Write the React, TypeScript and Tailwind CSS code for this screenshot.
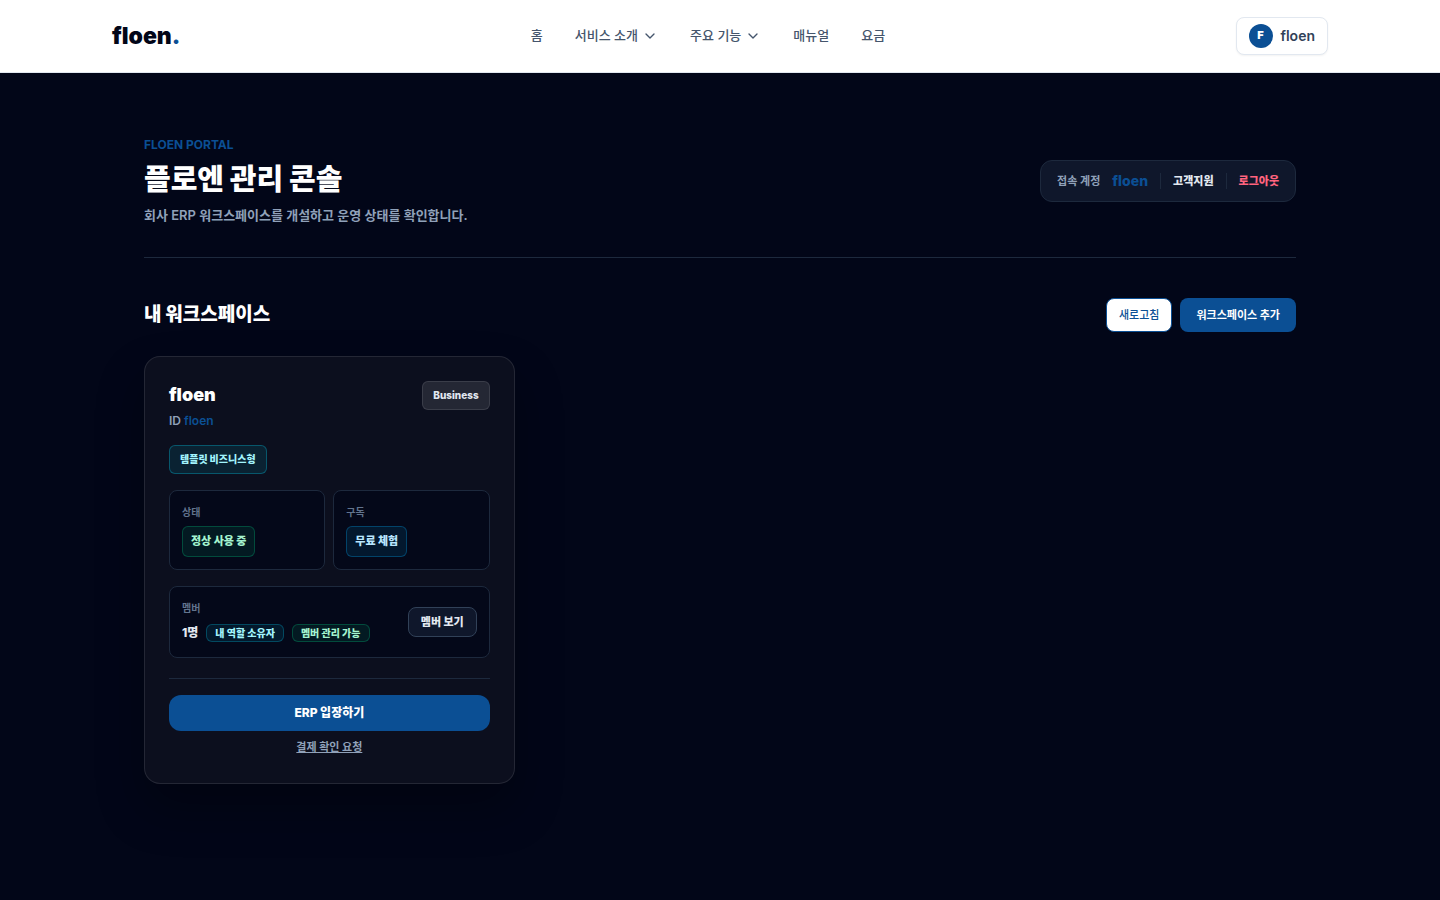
import { ChevronDown } from 'lucide-react'

interface Workspace {
  name: string;
  id: string;
  plan: string;
  template: string;
  status: string;
  subscription: string;
  members: number;
}

const navItems = [
  { label: '홈', menu: false },
  { label: '서비스 소개', menu: true },
  { label: '주요 기능', menu: true },
  { label: '매뉴얼', menu: false },
  { label: '요금', menu: false },
]

const workspaces: Workspace[] = [
  {
    name: 'floen',
    id: 'floen',
    plan: 'Business',
    template: '템플릿 비즈니스형',
    status: '정상 사용 중',
    subscription: '무료 체험',
    members: 1,
  },
]

function SiteHeader() {
  return (
    <header className="border-b border-slate-200 bg-white">
      <div className="mx-auto flex h-18 max-w-7xl items-center justify-between px-8">
        <a href="#" className="text-[23px] leading-8 font-black text-slate-950">
          floen<span className="text-[#0b4f94]">.</span>
        </a>
        <nav className="flex items-center gap-8 text-[13px] font-medium text-slate-600">
          {navItems.map((item) =>
            item.menu ? (
              <button key={item.label} type="button" className="flex items-center gap-1">
                {item.label}
                <ChevronDown className="size-4" />
              </button>
            ) : (
              <a key={item.label} href="#">{item.label}</a>
            )
          )}
        </nav>
        <button type="button" className="flex h-[38px] items-center gap-2 rounded-lg border border-slate-200 bg-white px-3 text-sm font-semibold text-slate-700 shadow-xs">
          <span className="flex size-6 items-center justify-center rounded-full bg-[#0b4f94] text-[11px] font-black text-white">F</span>
          floen
        </button>
      </div>
    </header>
  )
}

function ConsoleHeader() {
  return (
    <div className="flex items-center justify-between border-b border-slate-800 pb-8">
      <div>
        <p className="text-xs font-bold text-[#0b4f94]">FLOEN PORTAL</p>
        <h1 className="mt-2 text-[29px] leading-[38px] font-black text-white">플로엔 관리 콘솔</h1>
        <p className="mt-1.5 text-[13px] leading-5 font-semibold text-slate-400">
          회사 ERP 워크스페이스를 개설하고 운영 상태를 확인합니다.
        </p>
      </div>
      <div className="flex items-center gap-3 rounded-xl border border-slate-800 bg-slate-900 px-4 py-2.5 text-[11px]">
        <span className="font-semibold text-slate-400">접속 계정</span>
        <span className="text-sm font-extrabold text-[#0b4f94]">floen</span>
        <span className="h-4 w-px bg-slate-800" />
        <a href="#" className="font-black text-slate-200">고객지원</a>
        <span className="h-4 w-px bg-slate-800" />
        <button type="button" className="font-black text-rose-400">로그아웃</button>
      </div>
    </div>
  )
}

function WorkspaceCard({ workspace }: { workspace: Workspace }) {
  return (
    <article className="rounded-2xl border border-white/10 bg-[#0c0f1e] p-6 shadow-[0_24px_48px_rgba(0,0,0,0.3)]">
      <div className="flex items-start justify-between">
        <div>
          <h3 className="text-lg leading-7 font-black text-white">{workspace.name}</h3>
          <p className="mt-1 text-xs font-semibold text-slate-400">
            ID <span className="text-[#0b4f94]">{workspace.id}</span>
          </p>
        </div>
        <span className="rounded-md border border-white/10 bg-white/10 px-2.5 py-1.5 text-[10px] leading-[15px] font-extrabold text-slate-200">
          {workspace.plan}
        </span>
      </div>

      <div className="mt-4 flex">
        <span className="rounded-md border border-cyan-400/30 bg-cyan-400/10 px-2.5 py-1.5 text-[10px] leading-[15px] font-black text-cyan-200">
          {workspace.template}
        </span>
      </div>

      <dl className="mt-4 grid grid-cols-2 gap-2">
        <div className="rounded-lg border border-slate-800 bg-slate-950/80 px-3 pt-3.5 pb-3">
          <dt className="text-[10px] leading-[15px] font-bold text-slate-500">상태</dt>
          <dd className="mt-1.5 flex">
            <span className="rounded-md border border-emerald-500/30 bg-emerald-500/10 px-2 py-1.5 text-[11px] leading-[17px] font-extrabold text-emerald-200">
              {workspace.status}
            </span>
          </dd>
        </div>
        <div className="rounded-lg border border-slate-800 bg-slate-950/80 px-3 pt-3.5 pb-3">
          <dt className="text-[10px] leading-[15px] font-bold text-slate-500">구독</dt>
          <dd className="mt-1.5 flex">
            <span className="rounded-md border border-sky-500/30 bg-sky-500/10 px-2 py-1.5 text-[11px] leading-[17px] font-extrabold text-sky-200">
              {workspace.subscription}
            </span>
          </dd>
        </div>
      </dl>

      <div className="mt-4 flex items-center justify-between rounded-lg border border-slate-800 bg-slate-950/80 px-3 py-3.5">
        <div>
          <p className="text-[10px] leading-[15px] font-bold text-slate-500">멤버</p>
          <div className="mt-2 mb-px flex items-center gap-2 font-extrabold">
            <span className="text-xs text-slate-200">{workspace.members}명</span>
            <span className="rounded-md border border-cyan-500/30 bg-cyan-500/10 px-2 text-[10px] leading-4 text-cyan-200">내 역할 소유자</span>
            <span className="rounded-md border border-emerald-500/30 bg-emerald-500/10 px-2 text-[10px] leading-4 text-emerald-200">멤버 관리 가능</span>
          </div>
        </div>
        <button type="button" className="h-[30px] rounded-lg border border-slate-700 bg-slate-900 px-3 text-[11px] font-extrabold text-slate-200">
          멤버 보기
        </button>
      </div>

      <div className="mt-5 border-t border-slate-800 pt-4 text-center">
        <button type="button" className="h-9 w-full rounded-xl bg-[#0b4f94] text-xs font-extrabold text-white">
          ERP 입장하기
        </button>
        <a href="#" className="mt-2 mb-1 inline-block text-[11px] leading-4 font-bold text-slate-400 underline">
          결제 확인 요청
        </a>
      </div>
    </article>
  )
}

export default function App() {
  return (
    <div className="min-h-screen bg-slate-950 font-['Inter','Noto_Sans_CJK_KR',sans-serif]">
      <SiteHeader />
      <main className="mx-auto max-w-6xl py-16">
        <ConsoleHeader />
        <section className="mt-10">
          <div className="flex items-center justify-between">
            <h2 className="text-[19px] leading-8 font-black text-white">내 워크스페이스</h2>
            <div className="flex gap-2 text-[11px]">
              <button type="button" className="h-[34px] rounded-lg border border-[#0b4f94] bg-white px-3 font-medium text-[#0b4f94]">
                새로고침
              </button>
              <button type="button" className="h-[34px] rounded-lg bg-[#0b4f94] px-4 font-bold text-white">
                워크스페이스 추가
              </button>
            </div>
          </div>
          <div className="mt-6 grid grid-cols-3 gap-5">
            {workspaces.map((workspace) => (
              <WorkspaceCard key={workspace.id} workspace={workspace} />
            ))}
          </div>
        </section>
      </main>
    </div>
  )
}
